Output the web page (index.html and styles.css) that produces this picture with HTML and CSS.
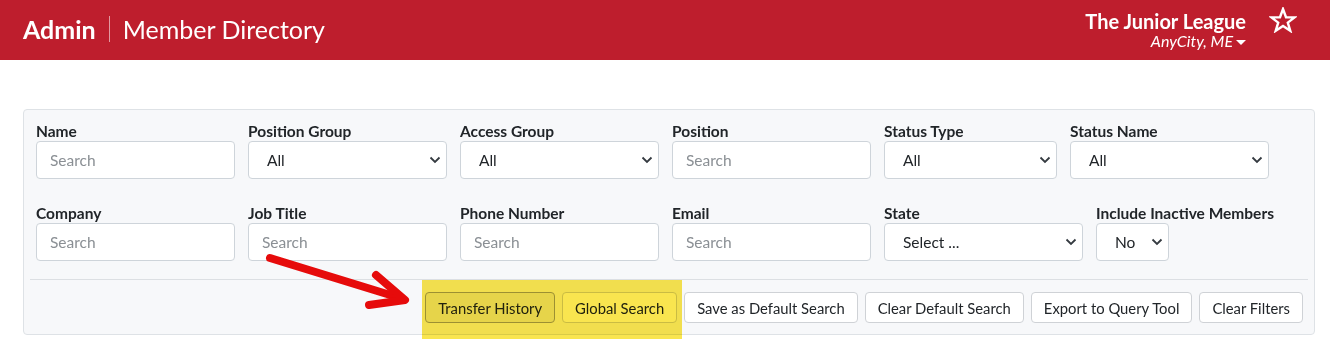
FILE: index.html
```html
<!DOCTYPE html>
<html lang="en">
<head>
    <meta charset="UTF-8">
    <meta name="viewport" content="width=device-width, initial-scale=1.0">
    <title>Member Directory</title>
    <link rel="stylesheet" href="styles.css">
</head>
<body>
    <!-- Top bar -->
    <header class="topbar">
        <div class="brand">
            <span class="brand-admin">Admin</span>
            <span class="brand-divider"></span>
            <span class="brand-page">Member Directory</span>
        </div>
        <div class="league">
            <div class="league-name">The Junior League</div>
            <div class="league-city">AnyCity, ME<span class="caret"></span></div>
        </div>
        <svg class="star" width="28" height="26" viewBox="0 0 28 26">
            <polygon points="14,2 17,10.2 25.6,10.4 18.8,15.6 21.3,23.8 14,19 6.7,23.8 9.2,15.6 2.4,10.4 11,10.2"
                     fill="none" stroke="#fff" stroke-width="2.4" stroke-linejoin="miter"/>
        </svg>
    </header>

    <main class="page">
        <!-- Filter panel -->
        <section class="filters">
            <div class="fields">
                <div class="field">
                    <label>Name</label>
                    <input type="text" placeholder="Search">
                </div>
                <div class="field">
                    <label>Position Group</label>
                    <select><option>All</option></select>
                </div>
                <div class="field">
                    <label>Access Group</label>
                    <select><option>All</option></select>
                </div>
                <div class="field">
                    <label>Position</label>
                    <input type="text" placeholder="Search">
                </div>
                <div class="field field-narrow">
                    <label>Status Type</label>
                    <select><option>All</option></select>
                </div>
                <div class="field">
                    <label>Status Name</label>
                    <select><option>All</option></select>
                </div>

                <div class="field">
                    <label>Company</label>
                    <input type="text" placeholder="Search">
                </div>
                <div class="field">
                    <label>Job Title</label>
                    <input type="text" placeholder="Search">
                </div>
                <div class="field">
                    <label>Phone Number</label>
                    <input type="text" placeholder="Search">
                </div>
                <div class="field">
                    <label>Email</label>
                    <input type="text" placeholder="Search">
                </div>
                <div class="field">
                    <label>State</label>
                    <select><option>Select ...</option></select>
                </div>
                <div class="field field-auto">
                    <label>Include Inactive Members</label>
                    <select class="select-small"><option>No</option></select>
                </div>
            </div>

            <hr class="divider">

            <div class="actions">
                <button class="btn btn-active">Transfer History</button>
                <button class="btn">Global Search</button>
                <button class="btn">Save as Default Search</button>
                <button class="btn">Clear Default Search</button>
                <button class="btn">Export to Query Tool</button>
                <button class="btn">Clear Filters</button>
            </div>
        </section>
    </main>

    <!-- Annotation: highlight + arrow -->
    <div class="highlight"></div>
    <svg class="arrow" width="1330" height="339" viewBox="0 0 1330 339">
        <line x1="270" y1="258" x2="400" y2="298" stroke="#e60b0b" stroke-width="8" stroke-linecap="round"/>
        <polyline points="376,275 405,300 369,305" fill="none" stroke="#e60b0b" stroke-width="8"
                  stroke-linecap="round" stroke-linejoin="round"/>
    </svg>
</body>
</html>
```

FILE: styles.css
```css
body {
    margin: 0;
    font-family: "Segoe UI", Lato, "Noto Sans", sans-serif;
    color: #212529;
    background-color: #fff;
}

/* Top bar */
.topbar {
    height: 60px;
    background-color: #be1e2d;
    color: #fff;
    display: flex;
    align-items: center;
    padding: 0 33px 0 23px;
}

.brand {
    display: flex;
    align-items: center;
    flex: 1;
    font-size: 25px;
    margin-top: -3px;
}

.brand-admin {
    font-weight: bold;
}

.brand-divider {
    width: 1px;
    height: 26px;
    background-color: rgba(255, 255, 255, 0.55);
    margin: 0 13px;
}

.league {
    text-align: right;
    margin-right: 23px;
    margin-top: -1px;
}

.league-name {
    font-size: 20px;
    font-weight: bold;
    line-height: 22px;
}

.league-city {
    font-size: 16px;
    font-style: italic;
    line-height: 18px;
}

.caret {
    display: inline-block;
    width: 0;
    height: 0;
    border-left: 5px solid transparent;
    border-right: 5px solid transparent;
    border-top: 5px solid #fff;
    vertical-align: middle;
    margin-left: 3px;
}

.star {
    margin-top: -20px;
}

/* Filter panel */
.page {
    padding: 49px 15px 0 23px;
}

.filters {
    background-color: #f7f8fa;
    border: 1px solid #dee2e6;
    border-radius: 4px;
    padding: 11px 6px 11px;
}

.fields {
    display: flex;
    flex-wrap: wrap;
    column-gap: 13px;
    row-gap: 24px;
    padding: 0 6px;
}

.field {
    width: 199px;
    display: flex;
    flex-direction: column;
}

.field-narrow {
    width: 173px;
}

.field-auto {
    width: auto;
}

.field label {
    font-size: 15.5px;
    font-weight: bold;
    line-height: 20px;
}

.field input,
.field select {
    box-sizing: border-box;
    height: 38px;
    border: 1px solid #ced4da;
    border-radius: 4px;
    background-color: #fff;
    font-family: inherit;
    font-size: 15.5px;
    color: #212529;
    outline: none;
}

.field input {
    padding: 0 13px;
}

.field input::placeholder {
    color: #8a8f94;
}

.field select {
    appearance: none;
    padding: 0 30px 0 18px;
    background-image: url("data:image/svg+xml,%3Csvg xmlns='http://www.w3.org/2000/svg' width='12' height='8' viewBox='0 0 12 8'%3E%3Cpath d='M1.5 1.5l4.5 4.5 4.5-4.5' fill='none' stroke='%23343a40' stroke-width='1.8'/%3E%3C/svg%3E");
    background-repeat: no-repeat;
    background-position: right 5px center;
}

.field .select-small {
    width: 73px;
}

.divider {
    border: none;
    border-top: 1px solid #dcdfe3;
    margin: 18px 0 12px;
}

.actions {
    display: flex;
    justify-content: flex-end;
    gap: 7px;
    padding-right: 5px;
}

.btn {
    height: 31px;
    padding: 0 12px;
    background-color: #fff;
    color: #212529;
    border: 1px solid #cfd2d6;
    border-radius: 4px;
    font-family: inherit;
    font-size: 14.8px;
    cursor: pointer;
}

.btn-active {
    background-color: #ececee;
    border-color: #a0a0a0;
}

/* Annotation overlays */
.highlight {
    position: absolute;
    left: 422px;
    top: 280px;
    width: 260px;
    height: 59px;
    background-color: #f9e54f;
    mix-blend-mode: multiply;
}

.arrow {
    position: absolute;
    left: 0;
    top: 0;
    pointer-events: none;
}
```
